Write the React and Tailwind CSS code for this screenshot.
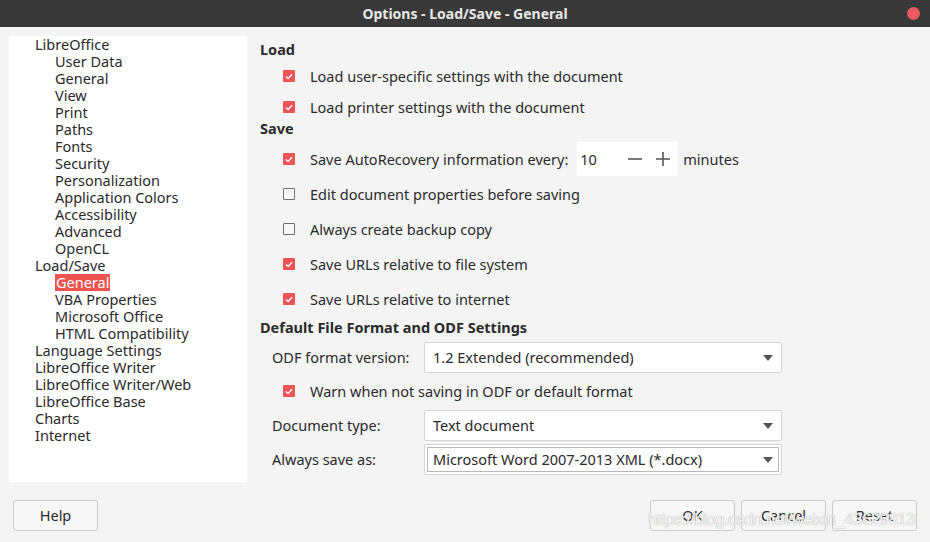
import React from 'react'

const TREE = [
  { label: 'LibreOffice', level: 0 },
  { label: 'User Data', level: 1 },
  { label: 'General', level: 1 },
  { label: 'View', level: 1 },
  { label: 'Print', level: 1 },
  { label: 'Paths', level: 1 },
  { label: 'Fonts', level: 1 },
  { label: 'Security', level: 1 },
  { label: 'Personalization', level: 1 },
  { label: 'Application Colors', level: 1 },
  { label: 'Accessibility', level: 1 },
  { label: 'Advanced', level: 1 },
  { label: 'OpenCL', level: 1 },
  { label: 'Load/Save', level: 0 },
  { label: 'General', level: 1, selected: true },
  { label: 'VBA Properties', level: 1 },
  { label: 'Microsoft Office', level: 1 },
  { label: 'HTML Compatibility', level: 1 },
  { label: 'Language Settings', level: 0 },
  { label: 'LibreOffice Writer', level: 0 },
  { label: 'LibreOffice Writer/Web', level: 0 },
  { label: 'LibreOffice Base', level: 0 },
  { label: 'Charts', level: 0 },
  { label: 'Internet', level: 0 },
]

function Check({ checked }) {
  if (!checked) {
    return <span className="w-[12px] h-[12px] border border-[#6f6f6f] rounded-[1px] bg-[#f7f7f7] shrink-0" />
  }
  return (
    <span className="w-[12px] h-[12px] bg-[#ee5454] rounded-[1px] shrink-0 flex items-center justify-center">
      <svg width="8" height="7" viewBox="0 0 8 7">
        <path d="M1 3.6 L3.1 5.6 L7 1.2" fill="none" stroke="white" strokeWidth="1.4" />
      </svg>
    </span>
  )
}

function CheckRow({ checked, children, className = '' }) {
  return (
    <div className={`h-[24px] flex items-center pl-[23px] ${className}`}>
      <Check checked={checked} />
      <span className="ml-[15px]">{children}</span>
    </div>
  )
}

function Header({ children, className = '' }) {
  return <div className={`h-[20px] flex items-center font-bold ${className}`}>{children}</div>
}

function Dropdown({ label, value, focused, className = '' }) {
  return (
    <div className={`flex items-center h-[31px] ${className}`}>
      <span className="w-[164px] pl-[12px]">{label}</span>
      <div className="w-[358px] h-[31px] bg-white border border-[#d4d4d4] rounded-[2px] relative flex items-center">
        {focused && <div className="absolute inset-[2px] border border-[#b8b8b8]" />}
        <span className="pl-[8px] flex-1">{value}</span>
        <svg width="10" height="6" viewBox="0 0 10 6" className="mr-[8px]">
          <path d="M0 0 H10 L5 6 Z" fill="#555" />
        </svg>
      </div>
    </div>
  )
}

function Button({ children, className = '' }) {
  return (
    <div className={`w-[85px] h-[31px] border border-[#cbcbcb] bg-[#f7f7f7] rounded-[3px] flex items-center justify-center ${className}`}>
      {children}
    </div>
  )
}

export default function App() {
  return (
    <div
      className="w-[930px] h-[542px] bg-[#f4f4f4] text-[#2a2a2a] text-[14.5px] leading-none flex flex-col overflow-hidden relative"
      style={{ fontFamily: '"Noto Sans", "Open Sans", sans-serif' }}
    >
      {/* Title bar */}
      <div className="h-[27px] bg-[#393939] flex items-center justify-center relative shrink-0">
        <span className="text-[#e8e8e8] font-bold text-[14px]">Options - Load/Save - General</span>
        <span className="absolute right-[10px] top-[7px] w-[13px] h-[13px] rounded-full bg-[#e85a5f]" />
      </div>

      <div className="flex h-[473px] shrink-0">
        {/* Tree */}
        <div className="ml-[9px] mt-[9px] w-[238px] h-[446px] bg-white shrink-0">
          {TREE.map((t, i) => (
            <div key={i} className={`h-[17px] flex items-center ${t.level ? 'pl-[46px]' : 'pl-[26px]'}`}>
              <span className={t.selected ? 'bg-[#ef5350] text-white px-[1px] h-[17px] flex items-center' : ''}>
                {t.label}
              </span>
            </div>
          ))}
        </div>

        {/* Settings */}
        <div className="ml-[13px] pt-[12px] flex-1">
          <Header>Load</Header>
          <CheckRow checked className="mt-[5px]">Load user-specific settings with the document</CheckRow>
          <CheckRow checked className="mt-[7px]">Load printer settings with the document</CheckRow>
          <Header className="-mt-[1px]">Save</Header>
          <div className="h-[34px] flex items-center pl-[23px] mt-[4px]">
            <Check checked />
            <span className="ml-[15px]">Save AutoRecovery information every:</span>
            <div className="ml-[9px] w-[100px] h-[34px] bg-white flex items-center">
              <span className="pl-[3px] flex-1">10</span>
              <svg width="14" height="14" viewBox="0 0 14 14" className="mr-[14px]">
                <path d="M0 7 H14" stroke="#555" strokeWidth="1.6" />
              </svg>
              <svg width="14" height="14" viewBox="0 0 14 14" className="mr-[7px]">
                <path d="M0 7 H14 M7 0 V14" stroke="#555" strokeWidth="1.6" />
              </svg>
            </div>
            <span className="ml-[6px]">minutes</span>
          </div>
          <CheckRow className="mt-[6px]">Edit document properties before saving</CheckRow>
          <CheckRow className="mt-[11px]">Always create backup copy</CheckRow>
          <CheckRow checked className="mt-[11px]">Save URLs relative to file system</CheckRow>
          <CheckRow checked className="mt-[11px]">Save URLs relative to internet</CheckRow>
          <Header className="mt-[6px]">Default File Format and ODF Settings</Header>
          <Dropdown className="mt-[5px]" label="ODF format version:" value="1.2 Extended (recommended)" />
          <CheckRow checked className="mt-[6px]">Warn when not saving in ODF or default format</CheckRow>
          <Dropdown className="mt-[7px]" label="Document type:" value="Text document" />
          <Dropdown className="mt-[3px]" label="Always save as:" value="Microsoft Word 2007-2013 XML (*.docx)" focused />
        </div>
      </div>

      {/* Buttons */}
      <div className="flex items-start px-[13px] shrink-0">
        <Button>Help</Button>
        <div className="flex-1" />
        <Button className="mr-[6px]">OK</Button>
        <Button className="mr-[6px]">Cancel</Button>
        <Button>Reset</Button>
      </div>

      {/* Watermark */}
      <div
        className="absolute left-[648px] top-[511px] text-[17px] text-white/90 tracking-[-0.6px]"
        style={{ fontFamily: '"Liberation Sans Narrow", "Liberation Sans", sans-serif', textShadow: '0 0 1px #888' }}
      >
        https://blog.csdn.net/weixin_43629813
      </div>
    </div>
  )
}
